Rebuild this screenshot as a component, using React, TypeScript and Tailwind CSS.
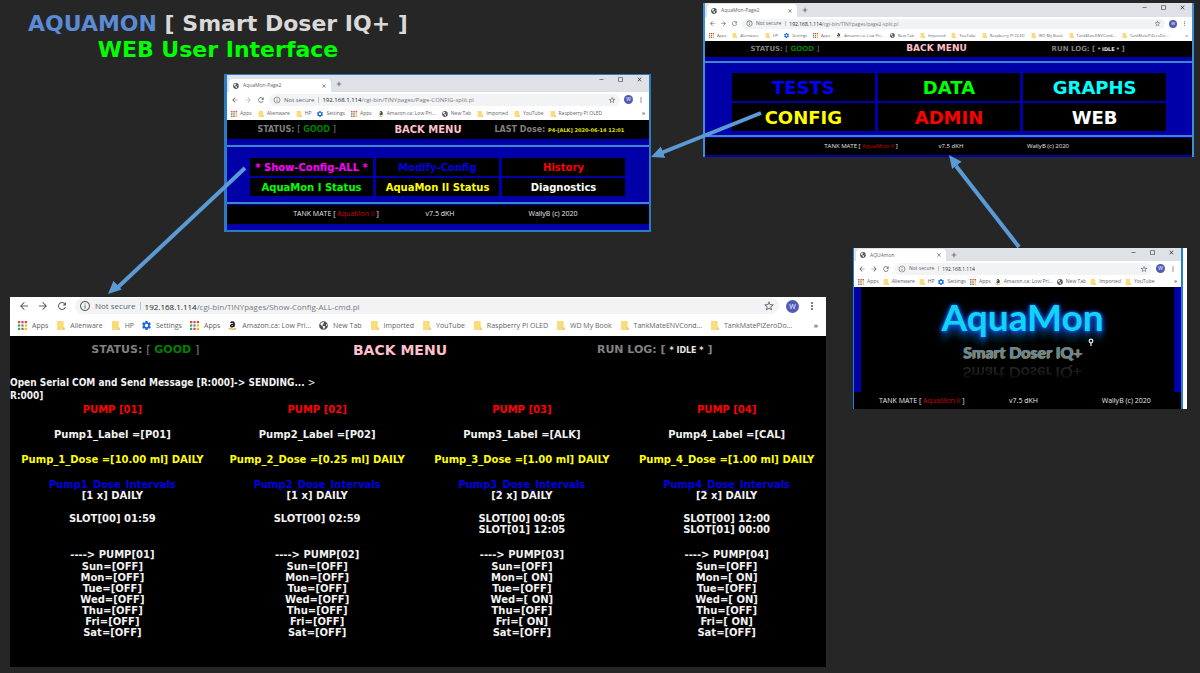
import type { ReactNode } from "react";
import {
  MdAdd,
  MdArrowBack,
  MdArrowForward,
  MdClose,
  MdCropSquare,
  MdInfoOutline,
  MdMoreVert,
  MdRefresh,
  MdRemove,
  MdSettings,
  MdStarBorder,
} from "react-icons/md";
import { FaGlobeAmericas } from "react-icons/fa";

type Size = "lg" | "md" | "sm" | "xs";

const styles: Record<
  Size,
  { tabs: string; tab: string; bar: string; nav: string; icon: string; pill: string; url: string; avatar: string; marks: string; mark: string; markIcon: string }
> = {
  lg: {
    tabs: "hidden",
    tab: "",
    bar: "h-[18px] gap-[7px] px-2",
    nav: "gap-[7px]",
    icon: "size-3",
    pill: "h-4 gap-1 px-1",
    url: "text-[8px]",
    avatar: "size-[13px] text-[7px]",
    marks: "h-[21px] gap-2 px-2 text-[7px]",
    mark: "gap-[5px]",
    markIcon: "size-[9px]",
  },
  md: {
    tabs: "h-[17px]",
    tab: "mt-1 ml-[2px] w-[102px] px-1 text-[5px]",
    bar: "h-[15px] gap-1 px-1",
    nav: "gap-[5px]",
    icon: "size-2",
    pill: "h-3 gap-[3px] px-1",
    url: "text-[6px]",
    avatar: "size-[9px] text-[5px]",
    marks: "h-[13px] gap-[6px] px-1 text-[5px]",
    mark: "gap-[3px]",
    markIcon: "size-[6px]",
  },
  sm: {
    tabs: "h-[13px]",
    tab: "mt-px ml-[2px] w-[90px] px-1 text-[5px]",
    bar: "h-[15px] gap-1 px-1",
    nav: "gap-1",
    icon: "size-2",
    pill: "h-3 gap-[3px] px-1",
    url: "text-[5px]",
    avatar: "size-[9px] text-[5px]",
    marks: "h-[11px] gap-1 px-1 text-[5px]",
    mark: "gap-[3px]",
    markIcon: "size-[6px]",
  },
  xs: {
    tabs: "h-[14px]",
    tab: "mt-px ml-[2px] w-[90px] px-1 text-[5px]",
    bar: "h-[13px] gap-1 px-1",
    nav: "gap-1",
    icon: "size-[7px]",
    pill: "h-[10px] gap-[3px] px-1",
    url: "text-[5px]",
    avatar: "size-2 text-[4px]",
    marks: "h-[11px] gap-[6px] px-1 text-[4px]",
    mark: "gap-[3px]",
    markIcon: "size-[5px]",
  },
};

function AppsIcon({ className }: { className: string }) {
  const colors = ["#ea4335", "#ea4335", "#ea4335", "#34a853", "#4285f4", "#fbbc05", "#34a853", "#ea4335", "#fbbc05"];
  return (
    <svg viewBox="0 0 9 9" className={className} aria-hidden="true">
      {colors.map((c, i) => (
        <rect key={i} x={(i % 3) * 3.4} y={Math.floor(i / 3) * 3.4} width="2.2" height="2.2" fill={c} />
      ))}
    </svg>
  );
}

function FolderIcon({ className }: { className: string }) {
  return (
    <svg viewBox="0 0 9 9" className={className} aria-hidden="true">
      <path d="M1 0h6.700v6.200L8.600 7v2H1z" fill="#fadc7c" />
      <path d="M7.200 6.400h1.400V9H7.200z" fill="#e9c65e" />
    </svg>
  );
}

function AmazonIcon({ className }: { className: string }) {
  return (
    <svg viewBox="0 0 12 12" className={className} aria-hidden="true">
      <path d="M3.6 2.4C4.6.8 8 .6 8 3v4.6M8 4.2C5.200 4.200 3.600 4.900 3.700 6.500C3.900 8.200 6.900 8.200 7.900 5.900" fill="none" stroke="#111" strokeWidth="2" />
      <path d="M1 9.400c3 2 7 2 9.800.2" fill="none" stroke="#f59b23" strokeWidth="1.400" />
    </svg>
  );
}

type Kind = "apps" | "folder" | "gear" | "amazon" | "globe";

function MarkIcon({ kind, className }: { kind: Kind; className: string }) {
  if (kind === "apps") return <AppsIcon className={className} />;
  if (kind === "folder") return <FolderIcon className={className} />;
  if (kind === "amazon") return <AmazonIcon className={className} />;
  if (kind === "gear") return <MdSettings className={`${className} scale-125 text-[#1a66e0]`} />;
  return <FaGlobeAmericas className={`${className} text-[#4b4f54]`} />;
}

const bookmarks: [Kind, string][] = [
  ["apps", "Apps"],
  ["folder", "Alienware"],
  ["folder", "HP"],
  ["gear", "Settings"],
  ["apps", "Apps"],
  ["amazon", "Amazon.ca: Low Pri..."],
  ["globe", "New Tab"],
  ["folder", "Imported"],
  ["folder", "YouTube"],
  ["folder", "Raspberry PI OLED"],
  ["folder", "WD My Book"],
  ["folder", "TankMateENVCond..."],
  ["folder", "TankMatePiZeroDo..."],
];

function Chrome({ id, size, title, path, count, forward = true }: { id: string; size: Size; title?: string; path?: string; count: number; forward?: boolean }) {
  const s = styles[size];
  const host = "192.168.1.114";
  return (
    <div className="font-['Open_Sans','Noto_Sans',sans-serif] leading-none text-[#5f6368]">
      {title && (
        <div className={`flex bg-[#dee1e6] ${s.tabs}`}>
          <div className={`flex items-center gap-1 rounded-t-sm bg-white ${s.tab}`}>
            <FaGlobeAmericas className="size-[6px] text-[#4b4f54]" />
            <span className="flex-1">{title}</span>
            <button aria-label="Close tab"><MdClose className="size-[6px] text-[#333]" /></button>
          </div>
          <button aria-label="New tab" className="ml-1"><MdAdd className="size-2 text-[#333]" /></button>
          <div className="ml-auto flex gap-3 pt-px pr-[6px] text-[#333]">
            <button aria-label="Minimize" className="self-start"><MdRemove className="size-[7px]" /></button>
            <button aria-label="Maximize" className="self-start"><MdCropSquare className="size-[7px]" /></button>
            <button aria-label="Close" className="self-start"><MdClose className="size-[7px]" /></button>
          </div>
        </div>
      )}
      <div className={`flex items-center bg-white ${s.bar}`}>
        <div className={`flex ${s.nav}`}>
          <button aria-label="Back"><MdArrowBack className={s.icon} /></button>
          <button aria-label="Forward"><MdArrowForward className={`${s.icon} ${forward ? "" : "opacity-50"}`} /></button>
          <button aria-label="Reload"><MdRefresh className={s.icon} /></button>
        </div>
        <div className={`flex min-w-0 flex-1 items-center rounded-full bg-[#f1f3f4] ${s.pill} ${s.url}`}>
          <MdInfoOutline className={`shrink-0 ${s.icon}`} />
          <span className="shrink-0 border-r border-[#c0c3c7] pr-1">Not secure</span>
          <div className="flex min-w-0 flex-1 items-baseline">
            {path && <label htmlFor={id} className="text-[#202124]">{host}</label>}
            <input
              id={id}
              aria-label="Address"
              defaultValue={path ?? host}
              className={`min-w-0 flex-1 bg-transparent outline-none ${path ? "text-[#777b80]" : "text-[#303134]"}`}
            />
          </div>
          <button aria-label="Bookmark this page"><MdStarBorder className={s.icon} /></button>
        </div>
        <button aria-label="Profile" className={`flex items-center justify-center rounded-full bg-[#4f5bb5] text-white ${s.avatar}`}>W</button>
        <button aria-label="More"><MdMoreVert className={s.icon} /></button>
      </div>
      <nav aria-label="Bookmarks" className={`flex items-center bg-white whitespace-nowrap ${s.marks}`}>
        {bookmarks.slice(0, count).map(([kind, label], i) => (
          <a key={i} href="#" className={`flex items-center ${s.mark}`}>
            <MarkIcon kind={kind} className={`shrink-0 ${s.markIcon}`} />
            {label}
          </a>
        ))}
        <button aria-label="More bookmarks" className="ml-auto font-bold">»</button>
      </nav>
    </div>
  );
}

const verdana = "font-['DejaVu_Sans',Verdana,sans-serif] font-bold";
const segoe = "font-['Open_Sans','Noto_Sans',sans-serif]";

function StatusBar({ className, menuClass, children }: { className: string; menuClass: string; children: ReactNode }) {
  return (
    <div className={`grid grid-cols-3 items-center bg-black text-center whitespace-nowrap text-[#808080] ${verdana} ${className}`}>
      <div>
        STATUS: <span className="font-normal">[</span> <span className="text-[#008000]">GOOD</span> <span className="font-normal">]</span>
      </div>
      <a href="#" className={`text-[#ffc0cb] ${menuClass}`}>BACK MENU</a>
      <div>{children}</div>
    </div>
  );
}

function Footer({ className }: { className: string }) {
  return (
    <footer className={`grid items-center bg-black text-center whitespace-nowrap text-[#e8e8e8] ${segoe} ${className}`}>
      <span>TANK MATE [ <span className="text-[#d00000]">AquaMon II</span> ]</span>
      <span>v7.5 dKH</span>
      <span>WallyB (c) 2020</span>
    </footer>
  );
}

function MenuGrid({ items, className, cell }: { items: [string, string][]; className: string; cell: string }) {
  return (
    <nav className={`grid grid-cols-3 border-y-2 border-[#3f86cc] bg-[#0000a8] ${className}`}>
      {items.map(([label, color]) => (
        <a key={label} href="#" className={`flex items-center justify-center bg-black whitespace-nowrap ${verdana} ${cell} ${color}`}>
          {label}
        </a>
      ))}
    </nav>
  );
}

const days = ["Sun", "Mon", "Tue", "Wed", "Thu", "Fri", "Sat"];
const pumps = [
  { n: 1, label: "P01", dose: "10.00", times: ["01:59"], on: [] as string[] },
  { n: 2, label: "P02", dose: "0.25", times: ["02:59"], on: [] as string[] },
  { n: 3, label: "ALK", dose: "1.00", times: ["00:05", "12:05"], on: ["Mon", "Wed", "Fri"] },
  { n: 4, label: "CAL", dose: "1.00", times: ["12:00", "00:00"], on: ["Mon", "Wed", "Fri"] },
];

function ConfigReport() {
  return (
    <section className="absolute top-[297px] left-[10px] w-[816px] overflow-hidden bg-black">
      <Chrome id="url-report" size="lg" path="/cgi-bin/TINYpages/Show-Config-ALL-cmd.pl" count={13} />
      <StatusBar className="h-7 pr-11 pl-2 text-[11px]" menuClass="text-sm">
        RUN LOG: [ <span className="text-[8px] text-[#e6e6e6]">* IDLE *</span> ]
      </StatusBar>
      <div className={`pt-3 pb-[29px] text-[10px] leading-[11px] text-[#f2f2f2] ${verdana}`}>
        <p className="font-['DejaVu_Sans_Condensed','DejaVu_Sans',Tahoma,sans-serif] leading-[13px]">
          Open Serial COM and Send Message [R:000]-&gt; SENDING... <span className="font-normal">&gt;</span>
          <br />
          R:000]
        </p>
        <div className="-mr-[3px] grid grid-cols-4 pt-[2px] text-center whitespace-nowrap">
          {pumps.map((p) => (
            <div key={p.n}>
              <h2 className="text-[#ff0000]">PUMP [0{p.n}]</h2>
              <p className="mt-[14px]">Pump{p.n}_Label =[{p.label}]</p>
              <p className="mt-[14px] text-[#ffff00]">Pump_{p.n}_Dose =[{p.dose} ml] DAILY</p>
              <p className="mt-[14px] text-[#0000e0]">Pump{p.n}_Dose_Intervals</p>
              <p>[{p.times.length} x] DAILY</p>
              <div className="mt-3 h-9">
                {p.times.map((t, i) => (
                  <p key={t}>SLOT[0{i}] {t}</p>
                ))}
              </div>
              <p className="mb-px">----&gt; PUMP[0{p.n}]</p>
              {days.map((d) => (
                <p key={d}>{d}=[{p.on.includes(d) ? " ON" : "OFF"}]</p>
              ))}
            </div>
          ))}
        </div>
      </div>
    </section>
  );
}

function ConfigMenu() {
  return (
    <section className="absolute top-[74px] left-[224px] w-[427px] overflow-hidden border-t border-r-2 border-b-2 border-l-[3px] border-[#2b7bc4] bg-[#0000a8]">
      <Chrome id="url-config" size="md" title="AquaMon-Page2" path="/cgi-bin/TINYpages/Page-CONFIG-split.pl" count={10} forward={false} />
      <StatusBar className="h-[19px] pr-6 pl-1 text-[8px]" menuClass="text-[10px]">
        LAST Dose: <span className="text-[5px] text-[#e0e000]">P4-[ALK] 2020-06-14 12:01</span>
      </StatusBar>
      <MenuGrid
        className="mt-[6px] gap-x-[3px] gap-y-[2px] pt-[11px] pr-6 pb-[6px] pl-[23px]"
        cell="h-[18px] text-[10px]"
        items={[
          ["* Show-Config-ALL *", "text-[#ff00ff]"],
          ["Modify-Config", "text-[#0000e6]"],
          ["History", "text-[#ff0000]"],
          ["AquaMon I Status", "text-[#00ff00]"],
          ["AquaMon II Status", "text-[#ffff00]"],
          ["Diagnostics", "text-white"],
        ]}
      />
      <Footer className="mt-px mb-[6px] h-[19px] grid-cols-[118fr_90fr_136fr] pr-7 pl-[50px] text-[7px]" />
    </section>
  );
}

function MainMenu() {
  return (
    <section className="absolute top-[3px] left-[703px] w-[491px] overflow-hidden border-r-2 border-l-2 border-[#3d8fd6] bg-[#0000a8]">
      <Chrome id="url-main" size="xs" title="AquaMon-Page2" path="/cgi-bin/TINYpages/page2-split.pl" count={13} />
      <StatusBar className="h-4 pr-7 pl-1 text-[7px]" menuClass="text-[9px]">
        RUN LOG: [ <span className="text-[5px] text-[#e6e6e6]">* IDLE *</span> ]
      </StatusBar>
      <MenuGrid
        className="mt-1 gap-x-[3px] gap-y-[2px] pt-[10px] pr-[26px] pb-1 pl-[27px]"
        cell="h-[28px] text-[18px]"
        items={[
          ["TESTS", "text-[#0000ff]"],
          ["DATA", "text-[#00ff00]"],
          ["GRAPHS", "text-[#00ffff]"],
          ["CONFIG", "text-[#ffff00]"],
          ["ADMIN", "text-[#ff0000]"],
          ["WEB", "text-white"],
        ]}
      />
      <Footer className="mt-px mb-[2px] h-[17px] grid-cols-[100fr_80fr_114fr] pr-[87px] pl-[106px] text-[6px]" />
    </section>
  );
}

function HomeWindow() {
  return (
    <section className="absolute top-[248px] left-[853px] w-[334px] overflow-hidden border-r-4 border-white">
      <div className="border-r-2 border-l border-[#1f7fd0] bg-black">
        <Chrome id="url-home" size="sm" title="AQUAmon" count={9} />
        <div className="h-[105px] border-r-[7px] border-l-[7px] border-[#0000a8] pl-[10px] text-center font-['Lato','Open_Sans',sans-serif] font-bold">
          <h2 className="pt-[6px] text-[37px] leading-[48px] text-[#12d4f2] [text-shadow:0_0_3px_#0a5cf0,0_1px_5px_#0a5cf0,0_3px_8px_#0a48c8,0_10px_6px_#062b30]">AquaMon</h2>
          <p className="text-base leading-[22px] text-[#5f87a8] [text-shadow:1px_0_0_#a89648,0_1px_0_#7f7440]">Smart Doser IQ+</p>
          <p aria-hidden="true" className="-scale-y-100 text-base leading-5 text-[#3c3c3c] [mask-image:linear-gradient(to_bottom,transparent,rgba(0,0,0,0.8))]">
            Smart Doser IQ+
          </p>
        </div>
        <Footer className="h-[17px] grid-cols-[112fr_100fr_114fr] pt-[2px] pl-[14px] text-[7px]" />
      </div>
    </section>
  );
}

function Connectors() {
  return (
    <svg viewBox="0 0 1200 673" className="pointer-events-none absolute top-0 left-0 h-[673px] w-[1200px]" aria-hidden="true">
      <defs>
        <marker id="head" markerUnits="userSpaceOnUse" markerWidth="14" markerHeight="14" refX="13" refY="7" orient="auto">
          <path d="M0 1L13 7L0 13z" fill="#5b9bd5" />
        </marker>
      </defs>
      <g stroke="#5b9bd5" strokeWidth="4" fill="none">
        <path d="M761 113L661 153" />
        <path d="M245 168L116 289" />
        <path d="M1019 247L956 166" />
      </g>
      <g stroke="none" fill="none">
        <path d="M761 113L651 157" markerEnd="url(#head)" />
        <path d="M245 168L108 294" markerEnd="url(#head)" />
        <path d="M1019 247L949 155" markerEnd="url(#head)" />
      </g>
      <g stroke="#e6e6e6" strokeWidth="1.300" fill="none">
        <circle cx="1091" cy="341" r="1.800" />
        <path d="M1091 343v3" />
      </g>
    </svg>
  );
}

export default function App() {
  return (
    <main className="relative min-h-screen overflow-hidden bg-[#262626]">
      <h1 className={`w-fit pt-[11px] pl-7 text-center text-[22px] leading-[26px] whitespace-nowrap text-[#d9d9d9] ${verdana}`}>
        <span className="text-[#5b8bd5]">AQUAMON</span> [ Smart Doser IQ+ ]
        <br />
        <span className="text-[#00ff00]">WEB User Interface</span>
      </h1>
      <ConfigMenu />
      <MainMenu />
      <HomeWindow />
      <ConfigReport />
      <Connectors />
    </main>
  );
}
